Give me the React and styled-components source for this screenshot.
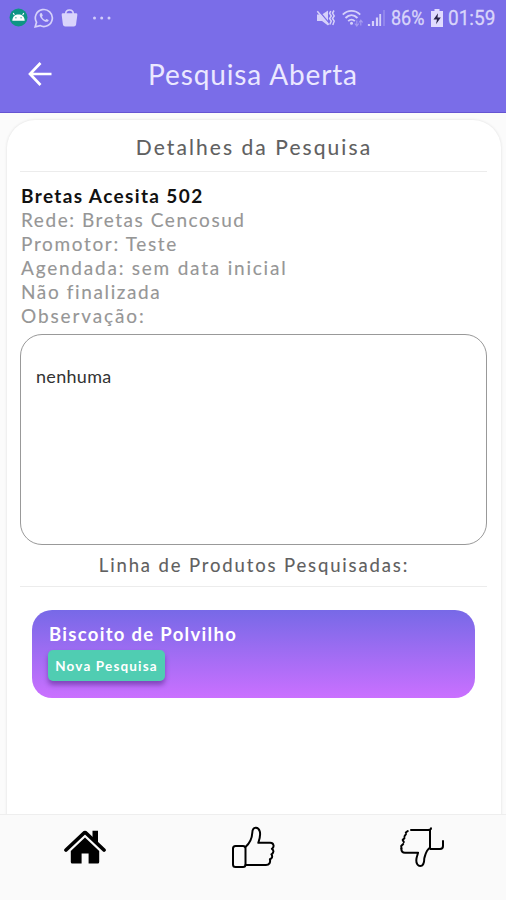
import React from 'react';
import styled, { createGlobalStyle } from 'styled-components';

const GlobalStyle = createGlobalStyle`
  * {
    box-sizing: border-box;
  }

  body {
    margin: 0;
    background: #fbfbfb;
    font-family: Lato, "Open Sans", sans-serif;
  }
`

const Screen = styled.div`
  display: flex;
  flex-direction: column;
  width: 506px;
  height: 900px;
  overflow: hidden;
  background: #fbfbfb;
`

const Header = styled.header`
  height: 113px;
  background: #7a6de8;
  border-bottom: 1px solid #6554d2;
`

const StatusBar = styled.div`
  display: flex;
  justify-content: space-between;
  height: 35px;
  padding: 0 10px 0 9px;
`

const StatusGroup = styled.div`
  display: flex;
  align-items: center;
`

const StatusIcon = styled.svg`
  display: block;
  flex: none;
  margin-right: ${props => props.$gap || 0}px;
`

const StatusText = styled.span`
  width: ${props => props.$width}px;
  margin-right: ${props => props.$gap || 0}px;
  color: #d9d5fa;
  font-family: Roboto, sans-serif;
  font-size: 20px;
  line-height: 36px;
  white-space: nowrap;
  -webkit-text-stroke: 0.3px #d9d5fa;

  span {
    display: inline-block;
    transform: scaleX(${props => props.$squeeze});
    transform-origin: left center;
  }
`

const TitleBar = styled.div`
  display: grid;
  grid-template-columns: 80px 1fr 80px;
  align-items: center;
  height: 77px;
`

const BackButton = styled.button`
  display: flex;
  width: 24px;
  margin-left: 28px;
  padding: 0;
  border: 0;
  background: none;
`

const Title = styled.h1`
  margin: 0;
  color: #ebe8ff;
  font-size: 28px;
  font-weight: 400;
  line-height: 34px;
  letter-spacing: 0.87px;
  text-align: center;
  white-space: nowrap;
`

const Content = styled.main`
  flex: 1;
  min-height: 0;
  padding: 7px 5px 0 7px;
  overflow: hidden;
`

const Card = styled.section`
  height: 740px;
  padding: 13px 14px 0 13px;
  border-radius: 28px 28px 0 0;
  background: #fff;
  box-shadow: 0 0 3px rgba(0, 0, 0, 0.12);
`

const SectionTitle = styled.h2`
  height: ${props => props.$height}px;
  margin: 0;
  padding-left: 1px;
  border-bottom: 1px solid #ececec;
  color: #606060;
  font-size: ${props => props.$size}px;
  font-weight: 400;
  line-height: ${props => props.$line}px;
  letter-spacing: ${props => props.$spacing}px;
  text-align: center;
  white-space: nowrap;
  -webkit-text-stroke: 0.1px #606060;
`

const Details = styled.div`
  padding: 12px 0 6px 1px;
`

const Detail = styled.div`
  height: 24px;
  color: ${props => props.$strong ? '#111' : '#969696'};
  font-size: 19px;
  font-weight: ${props => props.$strong ? 700 : 400};
  line-height: 24px;
  letter-spacing: ${props => props.$spacing}px;
  white-space: nowrap;
  -webkit-text-stroke: ${props => props.$strong ? 0 : '0.12px #969696'};
`

const Observation = styled.div`
  height: 211px;
  padding: 29px 15px;
  border: 1px solid #999;
  border-radius: 22px;
  color: #333;
  font-size: 18px;
  line-height: 24px;
  letter-spacing: 0.3px;
`

const Product = styled.article`
  height: 88px;
  margin: 23px 12px 0 12px;
  padding: 12px 16px;
  border-radius: 20px;
  background: linear-gradient(#7769e7, #ca70ff);
`

const ProductName = styled.h3`
  margin: 0 0 4px 1px;
  color: #fff;
  font-size: 18.5px;
  font-weight: 700;
  line-height: 24px;
  letter-spacing: 1.3px;
`

const ProductButton = styled.button`
  display: block;
  width: 117px;
  height: 31px;
  padding: 1px 0 0 0;
  border: 0;
  border-radius: 5px;
  background: #50cdb2;
  box-shadow: 0 4px 5px rgba(60, 20, 110, 0.45);
  color: #fff;
  font-family: Lato, sans-serif;
  font-size: 13.5px;
  font-weight: 700;
  line-height: 31px;
  letter-spacing: 1.15px;
  white-space: nowrap;
`

const BottomNav = styled.nav`
  display: grid;
  grid-template-columns: repeat(3, 1fr);
  height: 86px;
  border-top: 1px solid #eee;
  background: #fafafa;
`

const NavItem = styled.button`
  display: flex;
  justify-content: center;
  padding: 11px 0 0;
  border: 0;
  background: none;
`

const details = [
  { text: 'Bretas Acesita 502', spacing: 1.37, strong: true },
  { text: 'Rede: Bretas Cencosud', spacing: 1.56 },
  { text: 'Promotor: Teste', spacing: 1.65 },
  { text: 'Agendada: sem data inicial', spacing: 1.78 },
  { text: 'Não finalizada', spacing: 1.62 },
  { text: 'Observação:', spacing: 1.87 },
]

const AndroidIcon = () => (
  <StatusIcon width="19" height="19" viewBox="0 0 19 19" $gap={6}>
    <circle cx="9.5" cy="9.5" r="9" fill="#0e9584" />
    <path d="M5.3 7L4.3 5M13.7 7l1-2" stroke="#fff" strokeWidth="1.1" />
    <path d="M3.3 12.7C3.5 8.2 6 6.4 9.5 6.4s6 1.8 6.2 6.3z" fill="#fff" />
    <path d="M6.3 9.8h1.2M11.5 9.8h1.2" stroke="#0e9584" />
  </StatusIcon>
)

const WhatsappIcon = () => (
  <StatusIcon width="20" height="20" viewBox="0 0 20 20" $gap={7}>
    <path d="M1.2 18.8l1.3-4.5A8.5 8.5 0 1 1 6 17.6z" fill="none" stroke="#d6d1fa" strokeWidth="1.7" />
    <path d="M6.5 5.2c-1.5 1.2-.9 3.5 1.2 5.8s4.7 3.7 6.4 2.3c.8-.7.7-1.2.1-1.6l-1.7-.8-1.2 1.1c-1.5-.5-2.8-1.7-3.4-3.2l.9-1.1-.7-1.9c-.3-.9-.9-1.1-1.6-.6z" fill="#d6d1fa" />
  </StatusIcon>
)

const BagIcon = () => (
  <StatusIcon width="17" height="20" viewBox="0 0 18 20" $gap={14}>
    <path d="M5 7V5.5C5 3 6.6 1.5 9 1.5S13 3 13 5.5V7" fill="none" stroke="#d9d4fb" strokeWidth="1.7" />
    <path d="M2 5h14q1.4 0 1.3 1.5l-1.3 10.2c-.2 1.5-1 2.3-2.5 2.3h-9C3 19 2.2 18.2 2 16.7L.7 6.5Q.6 5 2 5z" fill="#d9d4fb" />
  </StatusIcon>
)

const DotsIcon = () => (
  <StatusIcon width="20" height="6" viewBox="0 0 20 6">
    <circle cx="2.5" cy="3" r="1.5" fill="#d2ccfa" />
    <circle cx="9.7" cy="3" r="1.5" fill="#d2ccfa" />
    <circle cx="17" cy="3" r="1.5" fill="#d2ccfa" />
  </StatusIcon>
)

const MuteIcon = () => (
  <StatusIcon width="20" height="18" viewBox="0 0 20 18" $gap={6}>
    <path d="M1 5.5h5l6-4v15l-6-4.5H1z" fill="#d6d1fa" />
    <path d="M2.5 1.5l11 13" stroke="#7a6de8" strokeWidth="1.3" />
    <path d="M1.3 2.3l11.5 13.5" stroke="#d6d1fa" strokeWidth="1.5" />
    <path d="M14.8 2l-1.2 2.3L15.3 7l-1.7 2.5 1.7 2.5-1.5 3.5M18 1.5L16.5 4l1.7 3-1.7 2.5 1.7 2.7L16.8 16" fill="none" stroke="#d6d1fa" strokeWidth="1.5" />
  </StatusIcon>
)

const WifiIcon = () => (
  <StatusIcon width="21" height="18" viewBox="0 0 21 18" $gap={4}>
    <g fill="none" stroke="#d6d1fa" strokeWidth="1.9">
      <path d="M.8 5.600c5-5 12.400-5 17.400 0" />
      <path d="M3.5 9c3.6-3.6 8.4-3.6 12 0" />
      <path d="M6.2 12.1c2-2 4.600-2 6.600 0" />
    </g>
    <circle cx="9.5" cy="14.3" r="1.5" fill="#d6d1fa" />
    <path d="M14.8 11.5v5m-2-2l2 2.5 2-2.5M18.8 16.5v-5m-1.8 2l1.8-2.3 1.8 2.3" fill="none" stroke="#a59bef" strokeWidth="1.1" />
  </StatusIcon>
)

const SignalIcon = () => (
  <StatusIcon width="18" height="18" viewBox="0 0 18 18" $gap={6}>
    <path d="M2 15v2M6 12v5M10 8.5V17" stroke="#d6d1fa" strokeWidth="2.2" />
    <path d="M13.2 5v12" stroke="#d6d1fa" strokeWidth="1.8" />
    <path d="M17 1v16" stroke="#978cec" strokeWidth="1.6" />
  </StatusIcon>
)

const BatteryIcon = () => (
  <StatusIcon width="12" height="18" viewBox="0 0 12 19" preserveAspectRatio="none" $gap={5}>
    <path d="M3.5 0h5v2H12v17H0V2h3.5z" fill="#e1dcff" />
    <path d="M7 4.5L2.5 11H6l-1 5 4.8-7H6.5z" fill="#282348" />
  </StatusIcon>
)

const BackIcon = () => (
  <svg width="24" height="24" viewBox="0 0 24 24" fill="none" stroke="#fff" strokeWidth="2.7">
    <path d="M12.5 1L2 12l10.5 11M2.5 12H23.5" />
  </svg>
)

const HomeIcon = () => (
  <svg width="44" height="44" viewBox="-1 -2 44 44">
    <path d="M29.5 2.8h5.5v14l-5.5-5z" />
    <path d="M3 22L20.5 5.5q1.5-1.4 3 0L41 22" fill="none" stroke="#000" strokeWidth="3.7" strokeLinecap="round" strokeLinejoin="round" />
    <path d="M22 9.500l14.200 13.500V34q0 1.500-1.500 1.500H25.600V25.500h-7v10H9.300q-1.500 0-1.500-1.500V23z" />
  </svg>
)

const ThumbsUpIcon = () => (
  <svg width="44" height="44" viewBox="0 0 44 44" fill="none" stroke="#000" strokeWidth="2" strokeLinejoin="round" strokeLinecap="round">
    <rect x="2" y="20" width="12.5" height="21" rx="2.5" />
    <path d="M14.5 21c4-3.5 6.5-8.5 6.8-14.2.2-6.3 6-6.5 7.5-1.2 1 3.7-.1 7.2-1.5 11.2h12c3.5 0 4.4 4.2 1.6 6 2.3 1.5 1.8 4.5-.5 5.500 1.500 2.200.6 4.300-1.500 5 .8 3.200-.6 5.700-4 5.700H14.500" />
  </svg>
)

const ThumbsDownIcon = () => (
  <svg width="46" height="44" viewBox="0 0 46 44" fill="none" stroke="#000" strokeWidth="2" strokeLinejoin="round" strokeLinecap="round">
    <path d="M12 4h17q3 0 3-1.7M31 4v18.5M31.5 23H41q3 0 3-3v-5M30.5 22c-3.5 2.5-4 6.5-5.2 10.2 0 11-8.3 9.2-8 2 0-2.5 1-4.7 1.8-7.4H6q-3.6 0-3.7-4" />
    <path d="M8.8 5l-2 1.5M7 8l-1.5 2.3M5.5 12L3.7 14l1.1 2M4.2 18l-2 2 .3 2.5" />
  </svg>
)

const App = () => {
  return (
    <>
      <GlobalStyle />
      <Screen>
        <Header>
          <StatusBar>
            <StatusGroup>
              <AndroidIcon />
              <WhatsappIcon />
              <BagIcon />
              <DotsIcon />
            </StatusGroup>
            <StatusGroup>
              <MuteIcon />
              <WifiIcon />
              <SignalIcon />
              <StatusText $width={35} $gap={5} $squeeze={0.9}><span>86%</span></StatusText>
              <BatteryIcon />
              <StatusText $width={48} $squeeze={0.95}><span>01:59</span></StatusText>
            </StatusGroup>
          </StatusBar>
          <TitleBar>
            <BackButton aria-label="Voltar"><BackIcon /></BackButton>
            <Title>Pesquisa Aberta</Title>
          </TitleBar>
        </Header>
        <Content>
          <Card>
            <SectionTitle $height={39} $line={28} $size={21} $spacing={2.07}>Detalhes da Pesquisa</SectionTitle>
            <Details>
              {details.map(item => (
                <Detail key={item.text} $strong={item.strong} $spacing={item.spacing}>{item.text}</Detail>
              ))}
            </Details>
            <Observation>nenhuma</Observation>
            <SectionTitle $height={42} $line={40} $size={18.5} $spacing={1.86}>Linha de Produtos Pesquisadas:</SectionTitle>
            <Product>
              <ProductName>Biscoito de Polvilho</ProductName>
              <ProductButton>Nova Pesquisa</ProductButton>
            </Product>
          </Card>
        </Content>
        <BottomNav>
          <NavItem aria-label="Início"><HomeIcon /></NavItem>
          <NavItem aria-label="Aprovar"><ThumbsUpIcon /></NavItem>
          <NavItem aria-label="Reprovar"><ThumbsDownIcon /></NavItem>
        </BottomNav>
      </Screen>
    </>
  );
}

export default App;
